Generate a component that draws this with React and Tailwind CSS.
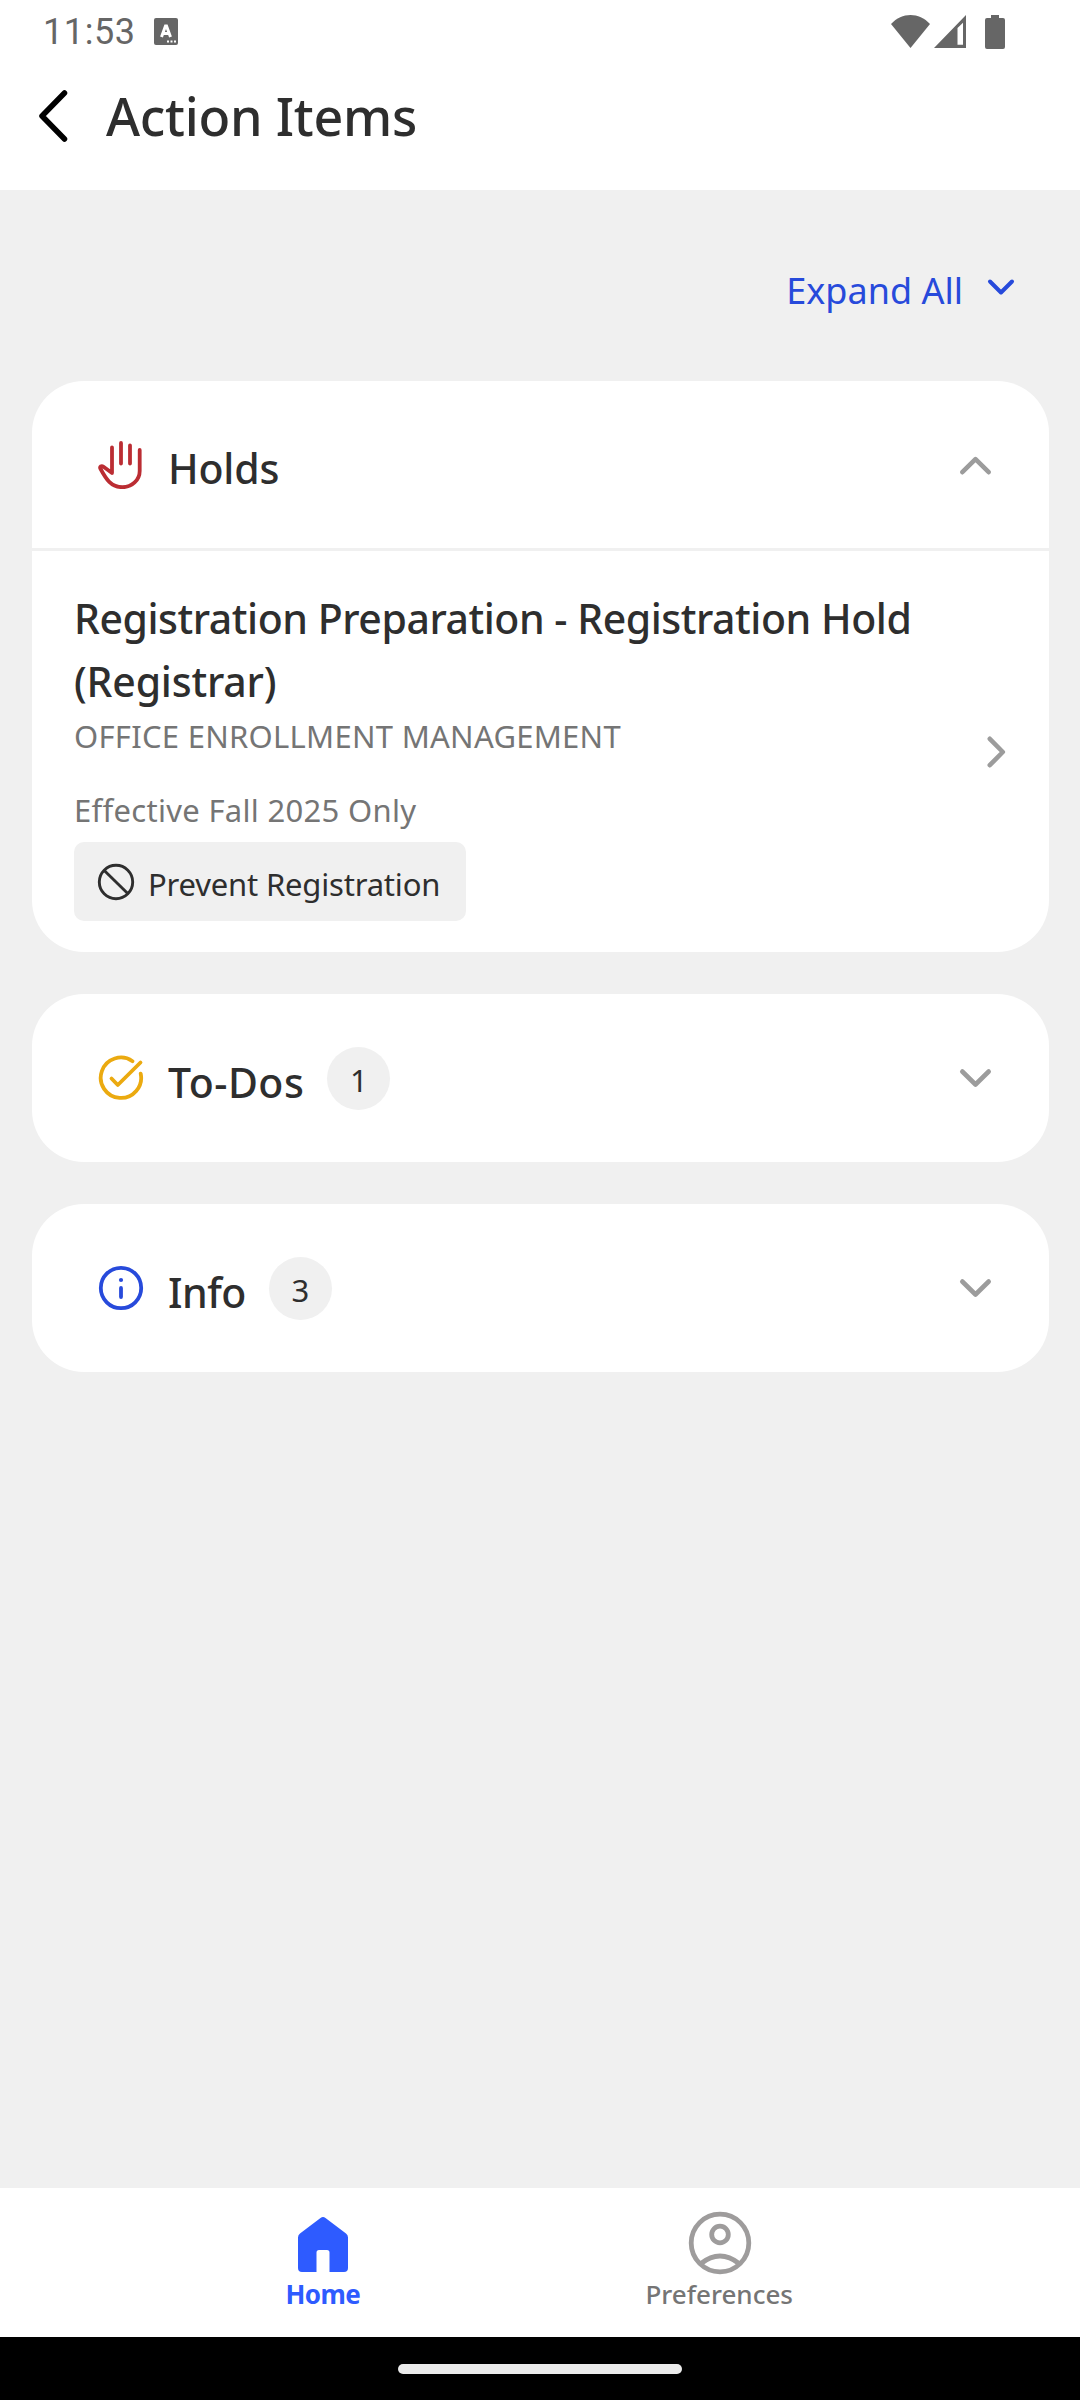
import React, { useState } from "react";

const HandIcon = () => (
  <svg className="w-12 h-12" viewBox="0 0 48 48" fill="none" stroke="#bb2d33" strokeWidth={3.8} strokeLinecap="round" strokeLinejoin="round">
    <path d="M15 6.5V32L6.5 25.8C4.5 24.3 2.2 25.5 3.6 28C9 38 14 46.2 25.5 46.2C35 46.2 42.7 39 42.7 30V9" />
    <path d="M24 2v20.500M33 4.500v18" />
  </svg>
);

const CheckIcon = () => (
  <svg className="w-12 h-12" viewBox="0 0 48 48" fill="none" stroke="#ebaa10" strokeWidth={3.8} strokeLinecap="round" strokeLinejoin="round">
    <path d="M35.500 7.200A20.200 20.200 0 1 0 43.700 19.600" />
    <path d="M14.500 24.500L20.800 31L43.500 8.500" />
  </svg>
);

const InfoIcon = () => (
  <svg className="w-12 h-12" viewBox="0 0 48 48" fill="none" stroke="#274adb" strokeWidth={3.8} strokeLinecap="round">
    <circle cx="24" cy="24" r="20.200" />
    <path d="M24 24v9" />
    <circle cx="24" cy="16" r="2.100" fill="#274adb" stroke="none" />
  </svg>
);

const BanIcon = () => (
  <svg className="w-10 h-10" viewBox="0 0 40 40" fill="none" stroke="#2e2e2e" strokeWidth={2.9}>
    <circle cx="20" cy="20" r="16.700" />
    <path d="M8.500 8.800L31.500 31.200" />
  </svg>
);

const HomeIcon = () => (
  <svg className="w-16 h-16" viewBox="0 0 64 64" fill="#2e5bff">
    <path d="M29.500 7Q32 5 34.500 7L55 22.500Q57 24 57 26.500V57Q57 61 53 61H38.500V41.500Q38.500 39 36 39H28Q25.500 39 25.500 41.500V61H11Q7 61 7 57V26.500Q7 24 9 22.500Z" />
  </svg>
);

const PersonIcon = () => (
  <svg className="w-16 h-16" viewBox="0 0 64 64" fill="none" stroke="#9e9c9c" strokeWidth={4.8}>
    <circle cx="32" cy="32" r="28.800" />
    <circle cx="32" cy="23.500" r="8.300" />
    <path d="M13 52.500Q32 37.500 51 52.500" />
  </svg>
);

const Chevron = ({ direction }) => {
  const paths = {
    up: "M7.300 27.200L20.500 14.200L33.700 27.200",
    down: "M7.300 13.500L20.500 26.500L33.700 13.500",
    right: "M12.800 6.800L25.800 20L12.800 33.200",
  };
  return (
    <svg className="w-10 h-10 shrink-0" viewBox="0 0 40 40" fill="none" stroke="#9c9c9c" strokeWidth={4.6} strokeLinecap="round" strokeLinejoin="round">
      <path d={paths[direction]} />
    </svg>
  );
};

const StatusBar = () => (
  <div className="h-[63px] flex items-center pl-[43px] pr-[75px] text-[#666]">
    <span className="font-['Roboto',sans-serif] text-[36px] leading-none tracking-[0.6px]">11:53</span>
    <svg className="w-6 h-[27px] ml-[18px]" viewBox="0 0 24 27">
      <rect width="24" height="27" rx="2" fill="#666" />
      <path d="M7.500 19L11.500 8H12.500L16.500 19M9 15.500H15" fill="none" stroke="#fff" strokeWidth="3" />
      <path d="M13 23.500h2M16.500 23.500h2M20 23.500h2" stroke="#fff" strokeWidth="2" />
    </svg>
    <svg className="w-[39px] h-[33px] ml-auto" viewBox="0 0 39 33" fill="#666">
      <path d="M0 9C11 -3 28 -3 39 9L19.500 33Z" />
    </svg>
    <svg className="w-8 h-[33px] ml-1" viewBox="0 0 32 33" fill="#666">
      <path fillRule="evenodd" d="M0 33L32 0V33ZM23.500 13V29.700H29V7.800Z" />
    </svg>
    <svg className="w-5 h-[34px] ml-[19px]" viewBox="0 0 20 34" fill="#666">
      <path d="M6 0H14V3H18Q20 3 20 5V32Q20 34 18 34H2Q0 34 0 32V5Q0 3 2 3H6Z" />
    </svg>
  </div>
);

const Section = ({ icon, title, titleClass, count, open, onToggle, children }) => (
  <section className="bg-white rounded-[52px] overflow-hidden">
    <button type="button" onClick={onToggle} className={`w-full flex items-center pl-[65px] pr-[54px] ${children ? "h-[167px]" : "h-[168px]"}`}>
      {icon}
      <span className={`ml-[23px] pt-[7px] text-[41px] leading-[56px] font-medium ${titleClass}`}>{title}</span>
      {count && (
        <span className="ml-[23px] w-[63px] h-[63px] rounded-full bg-[#f0f0f0] flex items-center justify-center pt-[4px] text-[31px]">
          {count}
        </span>
      )}
      <span className="ml-auto">
        <Chevron direction={open ? "up" : "down"} />
      </span>
    </button>
    {open && children}
  </section>
);

const App = () => {
  const [openSection, setOpenSection] = useState("holds");

  const toggle = (name) => {
    setOpenSection((prev) => (prev === name ? null : name));
  };

  return (
    <div className="w-[1080px] h-[2400px] flex flex-col bg-[#f0f0f0] text-[#2e2e2e] font-['Noto_Sans',sans-serif]">
      <header className="h-[190px] bg-white">
        <StatusBar />
        <div className="h-[105px] flex items-center pl-8">
          <svg className="w-10 h-14" viewBox="0 0 40 56" fill="none" stroke="#000" strokeWidth={5.5} strokeLinecap="round" strokeLinejoin="round">
            <path d="M32.500 5L10 28L32.500 51" />
          </svg>
          <h1 className="ml-[34px] text-[52px] leading-[70px] font-medium tracking-[-0.25px]">Action Items</h1>
        </div>
      </header>

      <main className="flex-1 px-8 pr-[31px]">
        <div className="h-[191px] pt-2 pr-8 flex items-center justify-end text-[#274adb]">
          <span className="pt-[2px] text-[36px]">Expand All</span>
          <svg className="w-8 h-6 ml-[22px] -mt-[5px]" viewBox="0 0 32 24" fill="none" stroke="#274adb" strokeWidth={4} strokeLinecap="round" strokeLinejoin="round">
            <path d="M5 6.500L16 17.500L27 6.500" />
          </svg>
        </div>

        <div className="flex flex-col gap-[42px]">
          <Section icon={<HandIcon />} title="Holds" titleClass="tracking-[-0.2px]" open={openSection === "holds"} onToggle={() => toggle("holds")}>
            <div className="border-t-[3px] border-[#f0f0f0] pt-9 pb-[31px] pl-[42px] pr-8 flex items-center justify-between">
              <div>
                <h2 className="text-[41px] leading-[63px] font-medium tracking-[-0.46px]">
                  Registration Preparation - Registration Hold
                  <br />
                  <span className="tracking-[-0.2px]">(Registrar)</span>
                </h2>
                <p className="-mt-px text-[31px] leading-[48px] text-[#757575] tracking-[0.27px]">OFFICE ENROLLMENT MANAGEMENT</p>
                <p className="mt-[26px] text-[31px] leading-[48px] text-[#757575] tracking-[0.3px]">Effective Fall 2025 Only</p>
                <div className="mt-2 w-[392px] h-[79px] rounded-[10px] bg-[#f0f0f0] flex items-center pl-[22px]">
                  <BanIcon />
                  <span className="ml-3 pt-[5px] text-[31px] leading-[48px] tracking-[-0.19px]">Prevent Registration</span>
                </div>
              </div>
              <span className="-mt-[5px]">
                <Chevron direction="right" />
              </span>
            </div>
          </Section>
          <Section icon={<CheckIcon />} title="To-Dos" titleClass="tracking-[0.5px]" count={1} open={openSection === "todos"} onToggle={() => toggle("todos")} />
          <Section icon={<InfoIcon />} title="Info" titleClass="tracking-[-0.5px]" count={3} open={openSection === "info"} onToggle={() => toggle("info")} />
        </div>
      </main>

      <nav className="h-[149px] bg-white flex pt-[23px] pl-[124px] pr-[161px]">
        <div className="flex-1 flex flex-col items-center text-[#2e5bff]">
          <HomeIcon />
          <span className="pt-px text-[26px] leading-9 font-bold tracking-[-0.6px]">Home</span>
        </div>
        <div className="flex-1 flex flex-col items-center text-[#757575]">
          <PersonIcon />
          <span className="pt-px pr-[2px] text-[26px] leading-9 font-medium">Preferences</span>
        </div>
      </nav>
      <div className="h-[63px] bg-black flex justify-center pt-[27px]">
        <div className="w-[284px] h-[10px] rounded-full bg-[#ebebeb]" />
      </div>
    </div>
  );
};

export default App;
